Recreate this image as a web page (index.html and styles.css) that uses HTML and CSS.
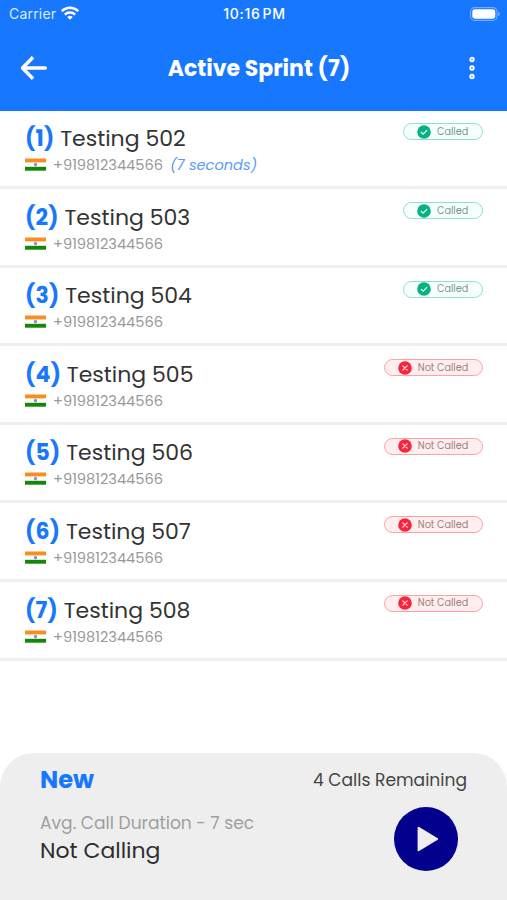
FILE: index.html
```html
<!DOCTYPE html>
<html lang="en">
<head>
<meta charset="utf-8">
<title>Active Sprint</title>
<link rel="stylesheet" href="styles.css">
</head>
<body>
<svg class="defs" width="0" height="0" aria-hidden="true">
  <symbol id="flag" viewBox="0 0 21 13">
    <rect width="21" height="13" fill="#fff"/>
    <rect y=".5" width="21" height="3.9" fill="#fb8c1e"/>
    <rect y="8.8" width="21" height="3.9" fill="#138808"/>
    <circle cx="10.5" cy="6.6" r="1.3" fill="#8f8fcb" stroke="#6a6ab8" stroke-width=".6"/>
  </symbol>
  <symbol id="check" viewBox="0 0 14 14">
    <circle cx="7" cy="7" r="6.8" fill="#07b183"/>
    <path d="M4.2 7.3l2 1.9 3.6-3.9" fill="none" stroke="#e4fff6" stroke-width="1.2" stroke-linecap="round" stroke-linejoin="round"/>
  </symbol>
  <symbol id="cross" viewBox="0 0 14 14">
    <circle cx="7" cy="7" r="6.8" fill="#f7263c"/>
    <path d="M4.8 4.8l4.4 4.4M9.2 4.8l-4.4 4.4" stroke="#ffe0e2" stroke-width="1.2" stroke-linecap="round"/>
  </symbol>
</svg>
<div class="screen">
  <header class="header">
    <div class="status">
      <div class="carrier">
        <span>Carrier</span>
        <svg width="18" height="14" viewBox="0 0 18 14" fill="none" stroke="#fff" stroke-width="2.5">
          <path d="M.8 5.2a11.7 11.7 0 0 1 16.4 0"/>
          <path d="M3.8 8.6a7.5 7.5 0 0 1 10.4 0"/>
          <path d="M9 13.8L6.2 11a4 4 0 0 1 5.6 0z" fill="#fff" stroke="none"/>
        </svg>
      </div>
      <span class="clock">10:16 PM</span>
      <svg class="battery" width="30" height="14" viewBox="0 0 30 14">
        <rect x=".6" y=".6" width="26.4" height="12.8" rx="4" fill="none" stroke="#fff" stroke-opacity=".4" stroke-width="1.1"/>
        <rect x="2.3" y="2.3" width="23" height="9.4" rx="2.4" fill="#fff"/>
        <path d="M28.2 4.9c1.9.8 1.9 3.4 0 4.2z" fill="#fff" fill-opacity=".5"/>
      </svg>
    </div>
    <div class="bar">
      <svg width="28" height="26" viewBox="0 0 28 26" fill="none" stroke="#fff" stroke-width="3.4" stroke-linecap="round" stroke-linejoin="round">
        <path d="M13 2.2L2.5 13 13 23.8" stroke-linecap="butt"/>
        <path d="M3 13h22.3"/>
      </svg>
      <h1>Active Sprint (7)</h1>
      <svg width="8" height="24" viewBox="0 0 8 24" fill="#5b9dff" stroke="#fff" stroke-width="1.7">
        <circle cx="4" cy="3.5" r="1.8"/><circle cx="4" cy="12" r="1.8"/><circle cx="4" cy="20.5" r="1.8"/>
      </svg>
    </div>
  </header>

  <main class="list">
    <article class="row">
      <div class="contact">
        <h2><b>(1)</b> Testing 502</h2>
        <p><svg class="flag"><use href="#flag"/></svg><span>+919812344566</span><em>(7 seconds)</em></p>
      </div>
      <span class="badge called"><svg><use href="#check"/></svg>Called</span>
    </article>
    <article class="row">
      <div class="contact">
        <h2><b>(2)</b> Testing 503</h2>
        <p><svg class="flag"><use href="#flag"/></svg><span>+919812344566</span></p>
      </div>
      <span class="badge called"><svg><use href="#check"/></svg>Called</span>
    </article>
    <article class="row">
      <div class="contact">
        <h2><b>(3)</b> Testing 504</h2>
        <p><svg class="flag"><use href="#flag"/></svg><span>+919812344566</span></p>
      </div>
      <span class="badge called"><svg><use href="#check"/></svg>Called</span>
    </article>
    <article class="row">
      <div class="contact">
        <h2><b>(4)</b> Testing 505</h2>
        <p><svg class="flag"><use href="#flag"/></svg><span>+919812344566</span></p>
      </div>
      <span class="badge missed"><svg><use href="#cross"/></svg>Not Called</span>
    </article>
    <article class="row">
      <div class="contact">
        <h2><b>(5)</b> Testing 506</h2>
        <p><svg class="flag"><use href="#flag"/></svg><span>+919812344566</span></p>
      </div>
      <span class="badge missed"><svg><use href="#cross"/></svg>Not Called</span>
    </article>
    <article class="row">
      <div class="contact">
        <h2><b>(6)</b> Testing 507</h2>
        <p><svg class="flag"><use href="#flag"/></svg><span>+919812344566</span></p>
      </div>
      <span class="badge missed"><svg><use href="#cross"/></svg>Not Called</span>
    </article>
    <article class="row">
      <div class="contact">
        <h2><b>(7)</b> Testing 508</h2>
        <p><svg class="flag"><use href="#flag"/></svg><span>+919812344566</span></p>
      </div>
      <span class="badge missed"><svg><use href="#cross"/></svg>Not Called</span>
    </article>
  </main>

  <footer class="panel">
    <div class="info">
      <h3>New</h3>
      <p class="avg">Avg. Call Duration - 7 sec</p>
      <p class="state">Not Calling</p>
    </div>
    <div class="actions">
      <span class="remaining">4 Calls Remaining</span>
      <button class="play" aria-label="Start calling">
        <svg width="22" height="26" viewBox="0 0 22 26"><path d="M1.6 1.8L20.2 13 1.6 24.2z" fill="#eee" stroke="#eee" stroke-width="2" stroke-linejoin="round"/></svg>
      </button>
    </div>
  </footer>
</div>
</body>
</html>
```
FILE: styles.css
```css
* { box-sizing: border-box; margin: 0; padding: 0; }

body {
  font-family: Poppins, Inter, sans-serif;
  background: #fff;
}

svg { display: block; flex: none; }
.defs { position: absolute; }

.screen {
  width: 507px;
  height: 900px;
  display: flex;
  flex-direction: column;
  overflow: hidden;
}

/* Header */
.header {
  height: 110.5px;
  flex: none;
  background: #1877ff;
  color: #fff;
}

.status {
  height: 28px;
  padding: 0 7px 0 9px;
  display: grid;
  grid-template-columns: 1fr auto 1fr;
  align-items: center;
  font-family: Inter, sans-serif;
  font-size: 14px;
  line-height: 28px;
}
.carrier { display: flex; align-items: center; gap: 5px; letter-spacing: .2px; color: #dceaff; }
.carrier svg { margin-top: -2px; }
.clock { font-weight: 500; letter-spacing: .75px; word-spacing: -2.5px; }
.battery { justify-self: end; margin-top: -1px; }

.bar {
  height: 80px;
  padding: 0 31px 0 20px;
  display: grid;
  grid-template-columns: 28px 1fr 8px;
  align-items: center;
}
.bar h1 {
  margin: 1px -7px 0 -5px;
  text-align: center;
  font-size: 22px;
  line-height: 30px;
  font-weight: 700;
}

/* Contact rows */
.list { flex: 1; }

.row {
  height: 78.6px;
  padding: 13.5px 24.5px 0 25px;
  display: flex;
  justify-content: space-between;
  align-items: flex-start;
  border-bottom: 3px solid #efefef;
}
.contact h2 {
  font-size: 22px;
  line-height: 30px;
  font-weight: 400;
  color: #333;
}
.contact b {
  font-weight: 700;
  color: #1877ff;
}
.contact p {
  display: flex;
  align-items: center;
  font-size: 14.6px;
  line-height: 22px;
  font-weight: 400;
  color: #999;
}
.flag { width: 21px; height: 13px; margin: -1px 7px 0 0; }
.contact em { margin-left: 7px; color: #579bf8; }

.badge {
  height: 17px;
  margin-top: -.6px;
  padding: 0 13.2px 0 13px;
  display: flex;
  align-items: center;
  gap: 6px;
  border: 1.5px solid;
  border-radius: 9px;
  font-size: 9.7px;
}
.badge svg { width: 14px; height: 14px; }
.called { background: #f5fffb; border-color: #8fe3c4; color: #75998c; }
.missed { background: #ffeeee; border-color: #ff9fab; color: #a1807e; }

/* Bottom panel */
.panel {
  height: 147px;
  flex: none;
  padding: 0 40px;
  display: flex;
  justify-content: space-between;
  background: #eee;
  border-radius: 34px 34px 0 0;
}
.info h3 {
  margin-top: 11px;
  font-size: 24.2px;
  line-height: 32px;
  font-weight: 700;
  color: #1877ff;
}
.avg {
  margin-top: 15px;
  font-size: 17.1px;
  line-height: 24px;
  color: #a0a0a0;
}
.state {
  margin-top: 1px;
  font-size: 22px;
  line-height: 30px;
  color: #2d2d2d;
}
.actions { display: flex; flex-direction: column; align-items: flex-end; }
.remaining {
  margin-top: 15px;
  font-size: 17.1px;
  line-height: 24px;
  color: #444;
}
.play {
  width: 64px;
  height: 64px;
  margin: 14.5px 9px 0 0;
  padding-left: 4px;
  display: flex;
  align-items: center;
  justify-content: center;
  border: 0;
  border-radius: 50%;
  background: #02008c;
}
```
